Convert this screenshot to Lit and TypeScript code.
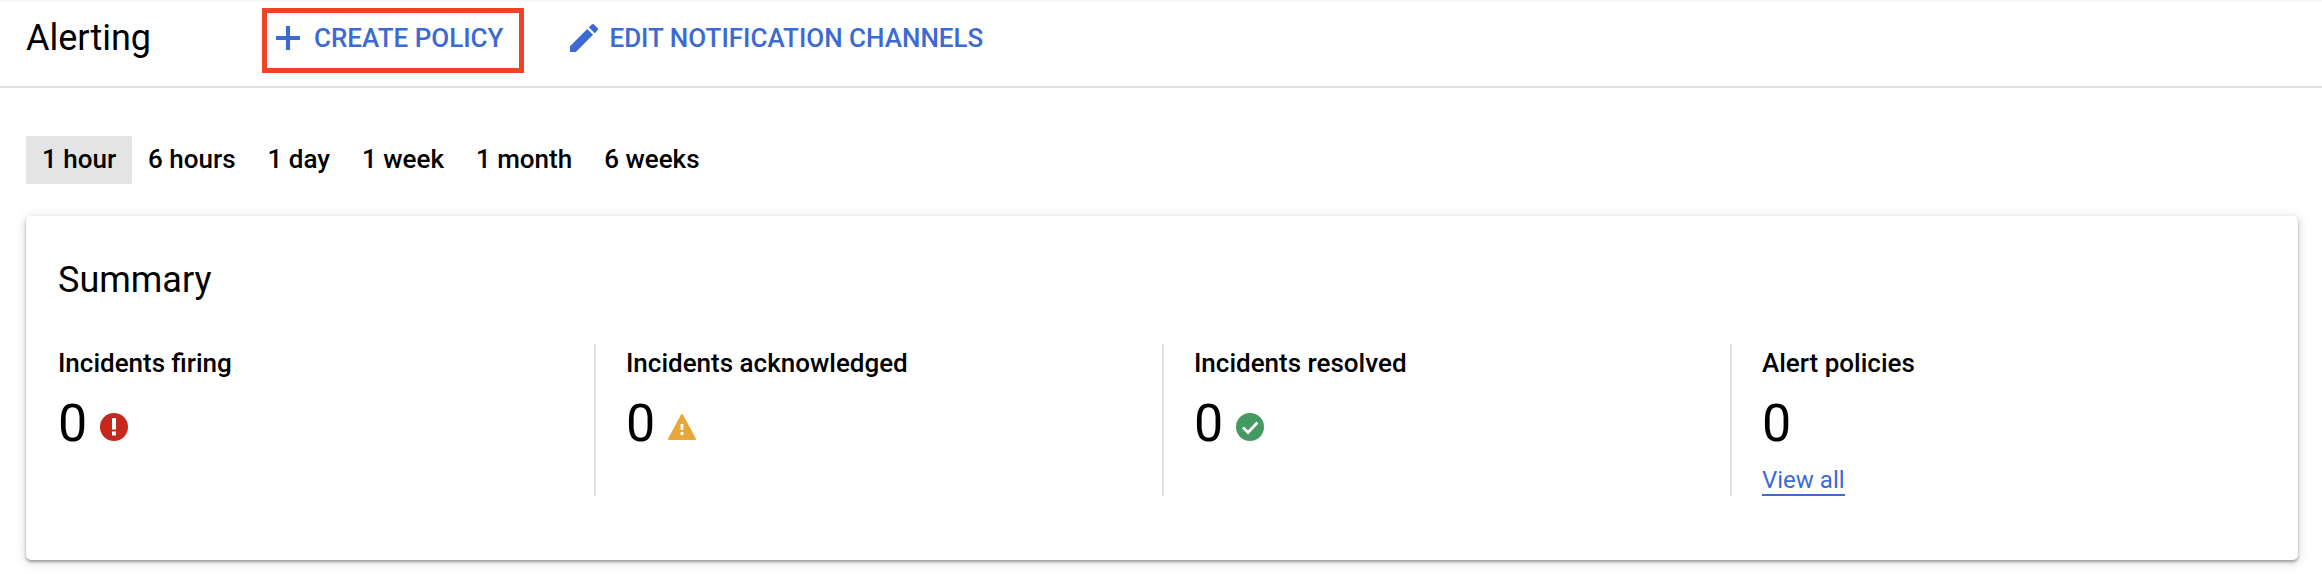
import { LitElement, html, css } from "lit";
import { customElement } from "lit/decorators.js";

@customElement("app-root")
export class AppRoot extends LitElement {
  static styles = css`
    :host { display: block; width: 2322px; height: 578px; overflow: hidden; background: #fff; font-family: Roboto, "Liberation Sans", sans-serif; color: #000; }
    .topbar { display: flex; align-items: flex-start; height: 86px; padding: 8px 0 0 26px; box-sizing: border-box; box-shadow: inset 0 3px 3px -2px rgba(0,0,0,.07); }
    .rule { height: 2px; background: #e1e1e1; }
    h1 { margin: 0; font-size: 36px; font-weight: 400; line-height: 60px; width: 236px; flex: none; }
    .btn { display: flex; align-items: center; flex: none; height: 65px; box-sizing: border-box; color: #3c6ad2; font-size: 26px; font-weight: 500; white-space: nowrap; border: 5px solid transparent; padding: 0 16px 6px 9px; }
    .btn.marked { border-color: #f04225; margin-right: 32px; padding-right: 16px; }
    .plus { width: 24px; height: 24px; margin-right: 14px; margin-top: 1px; fill: #3c6ad2; }
    .pencil { width: 28px; height: 28px; margin-right: 11px; margin-top: 1px; fill: #3c6ad2; }
    .tabs { display: flex; margin: 48px 0 0 26px; }
    .tab { height: 48px; line-height: 46px; padding: 0 16px; font-size: 26px; font-weight: 500; border-radius: 2px; }
    .tab.on { background: #e4e4e4; }
    .card { margin: 32px 0 0 26px; width: 2272px; height: 344px; box-sizing: border-box; padding-top: 39px; background: #fff; border-radius: 5px; box-shadow: 0 2px 3px rgba(60,64,67,.45), 0 2px 10px 2px rgba(60,64,67,.14); }
    h2 { margin: 0; padding-left: 32px; font-size: 36px; font-weight: 400; line-height: 50px; }
    .stats { display: flex; margin-top: 39px; height: 152px; }
    .stat { flex: 1 1 0; box-sizing: border-box; padding-left: 30px; border-left: 2px solid #e1e1e1; }
    .stat:first-child { padding-left: 32px; border-left: 0; }
    .label { font-size: 26px; font-weight: 500; line-height: 36px; margin-top: 1px; }
    .value { display: flex; align-items: center; height: 60px; margin-top: 13px; font-size: 52px; line-height: 60px; }
    .value svg { width: 28px; height: 28px; margin: 6px 0 0 13px; }
    a { display: inline-block; margin-top: 7px; padding-top: 6px; color: #3c6ad2; font-size: 24px; line-height: 27px; border-bottom: 2px solid #3c6ad2; text-decoration: none; }
  `;

  render() {
    return html`
      <div class="topbar">
        <h1>Alerting</h1>
        <div class="btn marked">
          <svg class="plus" viewBox="5 5 14 14"><path d="M19 13.2h-5.8V19h-2.4v-5.8H5v-2.4h5.8V5h2.4v5.8H19z"/></svg>
          CREATE POLICY
        </div>
        <div class="btn">
          <svg class="pencil" viewBox="3 3 18 18"><path d="M3 17.25V21h3.75L17.81 9.94l-3.75-3.75L3 17.25zM20.71 7.04c.39-.39.39-1.02 0-1.41l-2.34-2.34c-.39-.39-1.02-.39-1.41 0l-1.83 1.83 3.75 3.75 1.83-1.83z"/></svg>
          EDIT NOTIFICATION CHANNELS
        </div>
      </div>
      <div class="rule"></div>
      <div class="tabs">
        <div class="tab on">1 hour</div>
        <div class="tab">6 hours</div>
        <div class="tab">1 day</div>
        <div class="tab">1 week</div>
        <div class="tab">1 month</div>
        <div class="tab">6 weeks</div>
      </div>
      <div class="card">
        <h2>Summary</h2>
        <div class="stats">
          <div class="stat">
            <div class="label">Incidents firing</div>
            <div class="value">0
              <svg viewBox="0 0 28 28"><circle cx="14" cy="14" r="14" fill="#c5291c"/><rect x="12" y="5" width="4" height="11.5" fill="#fff"/><rect x="12" y="18.5" width="4" height="4" fill="#fff"/></svg>
            </div>
          </div>
          <div class="stat">
            <div class="label">Incidents acknowledged</div>
            <div class="value">0
              <svg viewBox="0 0 28 28"><path d="M14 2 L27 26 H1 Z" fill="#e8a73b" stroke="#e8a73b" stroke-width="2" stroke-linejoin="round"/><rect x="12.6" y="11" width="2.8" height="6" fill="#fff"/><rect x="12.6" y="19" width="2.8" height="3" fill="#fff"/></svg>
            </div>
          </div>
          <div class="stat">
            <div class="label">Incidents resolved</div>
            <div class="value">0
              <svg viewBox="0 0 28 28"><circle cx="14" cy="14" r="14" fill="#449a60"/><path d="M7 14.5 L12 19.5 L21.5 9.5" fill="none" stroke="#fff" stroke-width="2.8"/></svg>
            </div>
          </div>
          <div class="stat">
            <div class="label">Alert policies</div>
            <div class="value">0</div>
            <a href="#">View all</a>
          </div>
        </div>
      </div>
    `;
  }
}
